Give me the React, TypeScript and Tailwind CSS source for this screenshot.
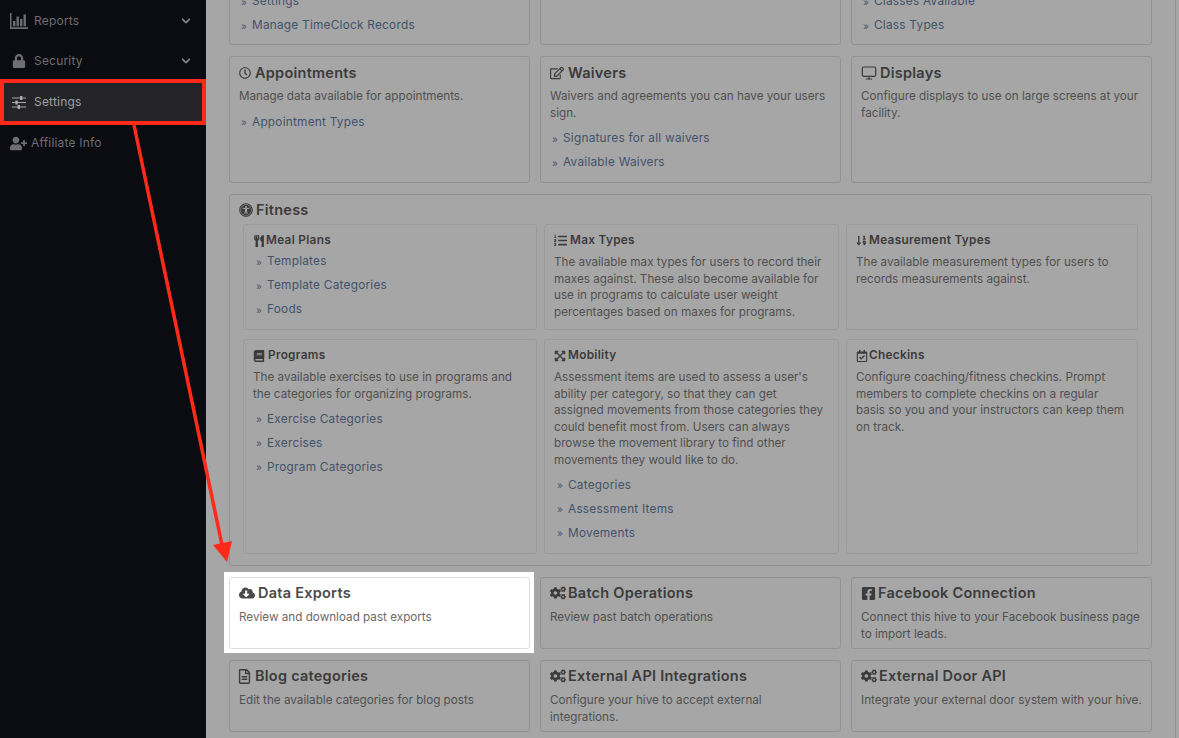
import React from 'react';
import { Monitor } from 'lucide-react';
import {
  FaBook,
  FaChevronDown,
  FaCloudDownloadAlt,
  FaCogs,
  FaExpandArrowsAlt,
  FaFacebookSquare,
  FaListOl,
  FaLock,
  FaRegCalendarCheck,
  FaRegClock,
  FaRegEdit,
  FaRegFileAlt,
  FaSortNumericDown,
  FaUniversalAccess,
  FaUserPlus,
  FaUtensils,
} from 'react-icons/fa';

const font = "font-['Inter','Open_Sans',sans-serif]";

function ReportsIcon() {
  return (
    <svg viewBox="0 0 18 16" className="w-[18px] h-[16px]" fill="currentColor">
      <path d="M0 0h1.5v14.2H18V16H0z" />
      <path d="M3 8h2.4v5.2H3zM6.5 3.5h2.4v9.7H6.5zM10 6h2.4v7.2H10zM13.5 1.5h2.4v11.7h-2.4z" />
    </svg>
  );
}

function SlidersIcon() {
  return (
    <svg viewBox="0 0 14 13" className="w-[14px] h-[13px]" fill="currentColor">
      <path d="M0 1.4h14v1.2H0zM0 5.9h14v1.2H0zM0 10.4h14v1.2H0z" />
      <path d="M8 0h2.4v4H8zM3.4 4.5h2.4v4H3.4zM5.6 9h2.4v4H5.6z" />
    </svg>
  );
}

function NavRow({
  icon,
  label,
  hasChevron,
  className,
}: {
  icon: React.ReactNode;
  label: string;
  hasChevron?: boolean;
  className?: string;
}) {
  return (
    <div className={`flex items-center text-[12px] tracking-[0.2px] ${className}`}>
      {icon}
      <span>{label}</span>
      {hasChevron && <FaChevronDown size={10} className="ml-auto mr-[15px] text-[#88888c]" />}
    </div>
  );
}

function Links({ items, className = '' }: { items: string[]; className?: string }) {
  return (
    <div className={className}>
      {items.map(item => (
        <div
          key={item}
          className="h-[24px] flex items-center pl-[3px] text-[11.8px] tracking-[0.25px] text-[#42526a]"
        >
          <span className="text-[#4d5a6c] w-[10px] mr-[1px] text-[10px]">»</span>
          {item}
        </div>
      ))}
    </div>
  );
}

function Card({
  icon,
  title,
  desc,
  links,
  highlight,
  compact,
  className = '',
}: {
  icon: React.ReactNode;
  title: string;
  desc?: string;
  links?: string[];
  highlight?: boolean;
  compact?: boolean;
  className?: string;
}) {
  return (
    <div
      className={`border rounded-[3px] px-[9px] ${compact ? 'pt-[6px]' : 'pt-[7px]'} ${className} ${
        highlight ? 'bg-white border-[#dedede] text-[#4a4a4a]' : 'border-[#929292] text-[#3b3b3b]'
      }`}
    >
      <div className="flex items-center gap-[4px] h-[18px] text-[14.5px] font-semibold tracking-[0.25px]">
        {icon}
        {title}
      </div>
      {desc && (
        <p
          className={`${compact ? 'mt-[7px]' : 'mt-[6px]'} text-[11.7px] leading-[16.6px] ${
            highlight ? 'text-[#696969]' : 'text-[#505050]'
          }`}
        >
          {desc}
        </p>
      )}
      {links && <Links items={links} className="mt-[6px] -ml-[1px]" />}
    </div>
  );
}

function SubCard({
  icon,
  title,
  desc,
  links,
  height,
}: {
  icon: React.ReactNode;
  title: string;
  desc?: string;
  links?: string[];
  height: string;
}) {
  return (
    <div className={`border border-[#9b9b9b] rounded-[3px] px-[9px] pt-[8px] ${height}`}>
      <div className="flex items-center gap-[3px] h-[15px] text-[11.8px] font-semibold tracking-[0.3px] text-[#3b3b3b]">
        {icon}
        {title}
      </div>
      {desc && <p className="mt-[6px] text-[11.7px] leading-[16.5px] text-[#505050]">{desc}</p>}
      {links && <Links items={links} className={desc ? 'mt-[5.5px]' : 'mt-[2px]'} />}
    </div>
  );
}

export default function App() {
  return (
    <div className={`relative flex h-[738px] w-[1179px] overflow-hidden bg-[#a6a6a6] ${font}`}>
      <aside className="w-[206px] shrink-0 bg-[#0b0b12] text-[#6d6d72]">
        <NavRow
          icon={<span className="ml-[10px] mr-[6px]"><ReportsIcon /></span>}
          label="Reports"
          hasChevron
          className="h-[41px]"
        />
        <NavRow
          icon={<FaLock size={14} className="ml-[12px] mr-[8px]" />}
          label="Security"
          hasChevron
          className="h-[40px]"
        />
        <NavRow
          icon={<span className="ml-[12px] mr-[8px] text-[#a9a9ab]"><SlidersIcon /></span>}
          label="Settings"
          className="h-[42px] bg-[#232328] text-[#a0a0a2]"
        />
        <NavRow
          icon={<FaUserPlus size={17} className="ml-[10px] mr-[4px]" />}
          label="Affiliate Info"
          className="h-[40px]"
        />
      </aside>

      <main className="w-[970px] shrink-0 border-r border-[#929292] pl-[23px]">
        <div className="w-[923px] -mt-[40px] grid grid-cols-3 gap-x-[10px] gap-y-[11px]">
          <div className="border border-[#929292] rounded-[3px] h-[85px] px-[9px] flex flex-col justify-end pb-[6px]">
            <Links className="-ml-[1px]" items={['Settings', 'Manage TimeClock Records']} />
          </div>
          <div className="border border-[#929292] rounded-[3px] h-[85px]" />
          <div className="border border-[#929292] rounded-[3px] h-[85px] px-[9px] flex flex-col justify-end pb-[6px]">
            <Links className="-ml-[1px]" items={['Classes Available', 'Class Types']} />
          </div>

          <Card
            className="h-[127px]"
            icon={<FaRegClock size={12} />}
            title="Appointments"
            desc="Manage data available for appointments."
            links={['Appointment Types']}
          />
          <Card
            className="h-[127px]"
            icon={<FaRegEdit size={14} />}
            title="Waivers"
            desc="Waivers and agreements you can have your users sign."
            links={['Signatures for all waivers', 'Available Waivers']}
          />
          <Card
            className="h-[127px]"
            icon={<Monitor size={16} strokeWidth={1.8} className="-mr-[1px]" />}
            title="Displays"
            desc="Configure displays to use on large screens at your facility."
          />

          <section className="col-span-3 h-[372px] border border-[#929292] rounded-[3px] px-[13px] pt-[6px]">
            <div className="-ml-[4px] flex items-center gap-[3px] h-[17px] text-[14.5px] font-semibold tracking-[0.25px] text-[#3b3b3b]">
              <FaUniversalAccess size={14} />
              Fitness
            </div>
            <div className="mt-[6px] grid grid-cols-[294px_295px_292px] gap-x-[7px] gap-y-[9px]">
              <SubCard
                height="h-[106px]"
                icon={<FaUtensils size={12} className="-mr-[2px]" />}
                title="Meal Plans"
                links={['Templates', 'Template Categories', 'Foods']}
              />
              <SubCard
                height="h-[106px]"
                icon={<FaListOl size={13} />}
                title="Max Types"
                desc="The available max types for users to record their maxes against. These also become available for use in programs to calculate user weight percentages based on maxes for programs."
              />
              <SubCard
                height="h-[106px]"
                icon={<FaSortNumericDown size={11} className="-mr-[1px]" />}
                title="Measurement Types"
                desc="The available measurement types for users to records measurements against."
              />
              <SubCard
                height="h-[215px]"
                icon={<FaBook size={12} />}
                title="Programs"
                desc="The available exercises to use in programs and the categories for organizing programs."
                links={['Exercise Categories', 'Exercises', 'Program Categories']}
              />
              <SubCard
                height="h-[215px]"
                icon={<FaExpandArrowsAlt size={12} className="-mr-[1px]" />}
                title="Mobility"
                desc="Assessment items are used to assess a user's ability per category, so that they can get assigned movements from those categories they could benefit most from. Users can always browse the movement library to find other movements they would like to do."
                links={['Categories', 'Assessment Items', 'Movements']}
              />
              <SubCard
                height="h-[215px]"
                icon={<FaRegCalendarCheck size={12} className="-mr-[2px]" />}
                title="Checkins"
                desc="Configure coaching/fitness checkins. Prompt members to complete checkins on a regular basis so you and your instructors can keep them on track."
              />
            </div>
          </section>

          <div className="relative -mt-[5px] -ml-[5px] -mr-[4px] -mb-[4px] bg-white pt-[5px] pl-[5px] pr-[4px] pb-[4px]">
            <Card
              highlight
              compact
              className="h-[72px]"
              icon={<FaCloudDownloadAlt size={16} className="-mr-[1px]" />}
              title="Data Exports"
              desc="Review and download past exports"
            />
          </div>
          <Card
            compact
            className="h-[72px]"
            icon={<FaCogs size={16} className="-mr-[2px]" />}
            title="Batch Operations"
            desc="Review past batch operations"
          />
          <Card
            compact
            className="h-[72px]"
            icon={<FaFacebookSquare size={15} className="-mr-[2px]" />}
            title="Facebook Connection"
            desc="Connect this hive to your Facebook business page to import leads."
          />
          <Card
            compact
            className="h-[72px]"
            icon={<FaRegFileAlt size={15} className="-ml-[2px] -mr-[1px]" />}
            title="Blog categories"
            desc="Edit the available categories for blog posts"
          />
          <Card
            compact
            className="h-[72px]"
            icon={<FaCogs size={16} className="-mr-[2px]" />}
            title="External API Integrations"
            desc="Configure your hive to accept external integrations."
          />
          <Card
            compact
            className="h-[72px]"
            icon={<FaCogs size={16} className="-mr-[2px]" />}
            title="External Door API"
            desc="Integrate your external door system with your hive."
          />
        </div>
      </main>

      <div className="absolute left-0 top-[79px] w-[206px] h-[46px] border-[4px] border-[#ff2a1a]" />
      <svg className="absolute inset-0 pointer-events-none" width="1179" height="738">
        <line x1="134" y1="125" x2="222" y2="545" stroke="#ff2a1a" strokeWidth="3.5" />
        <polygon points="213,545 232,541 227,562" fill="#ff2a1a" />
      </svg>
    </div>
  );
}
